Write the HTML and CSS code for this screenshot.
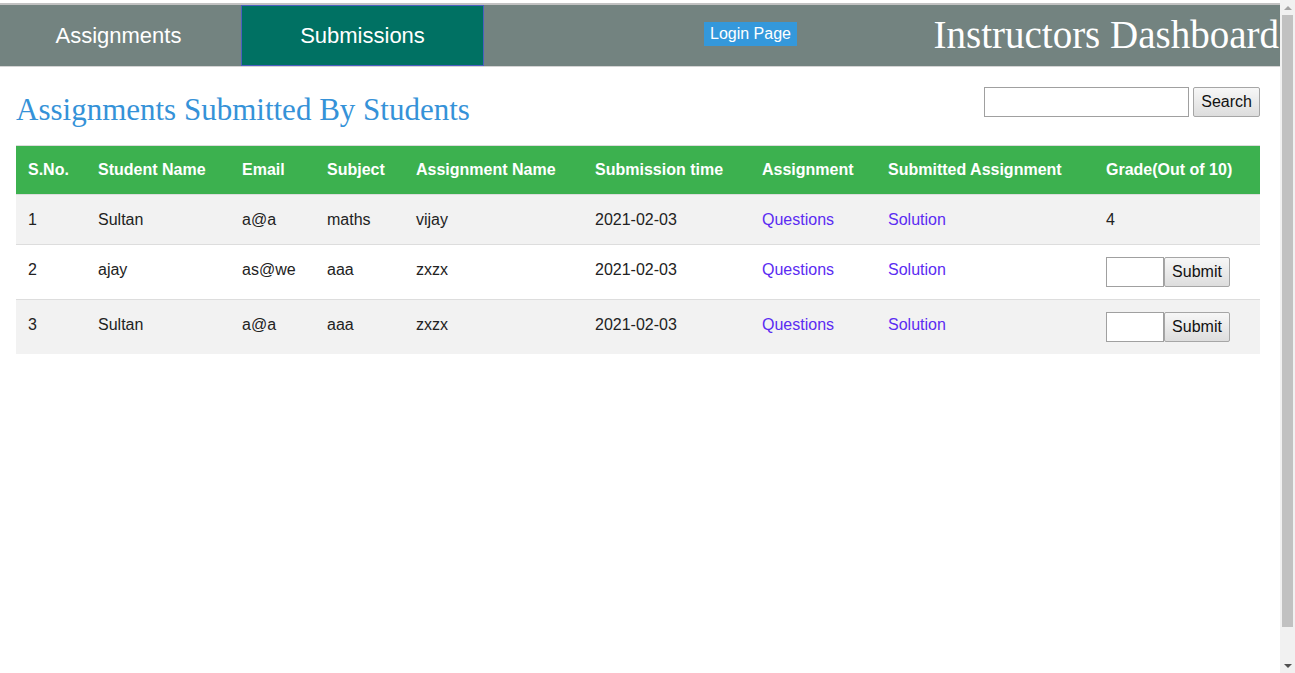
FILE: index.html
```html
<!DOCTYPE html>
<html>
<head>
<meta charset="utf-8">
<title>Instructors Dashboard</title>
<link rel="stylesheet" href="styles.css">
</head>
<body>
<div class="page">
  <nav class="topnav">
    <a class="tab tab-first" href="#">Assignments</a>
    <a class="tab tab-active" href="#">Submissions</a>
    <a class="login-btn" href="#">Login Page</a>
    <h1 class="site-title">Instructors Dashboard</h1>
  </nav>

  <main class="content">
    <div class="content-head">
      <h2 class="page-title">Assignments Submitted By Students</h2>
      <form class="search-form">
        <input class="search-input" type="text">
        <button class="btn" type="button">Search</button>
      </form>
    </div>

    <table class="sub-table">
      <colgroup>
        <col class="c-sno">
        <col class="c-name">
        <col class="c-email">
        <col class="c-subject">
        <col class="c-aname">
        <col class="c-time">
        <col class="c-assign">
        <col class="c-sol">
        <col class="c-grade">
      </colgroup>
      <thead>
        <tr>
          <th>S.No.</th>
          <th>Student Name</th>
          <th>Email</th>
          <th>Subject</th>
          <th>Assignment Name</th>
          <th>Submission time</th>
          <th>Assignment</th>
          <th>Submitted Assignment</th>
          <th>Grade(Out of 10)</th>
        </tr>
      </thead>
      <tbody>
        <tr class="row-alt">
          <td>1</td>
          <td>Sultan</td>
          <td>a@a</td>
          <td>maths</td>
          <td>vijay</td>
          <td>2021-02-03</td>
          <td><a class="link" href="#">Questions</a></td>
          <td><a class="link" href="#">Solution</a></td>
          <td>4</td>
        </tr>
        <tr>
          <td>2</td>
          <td>ajay</td>
          <td>as@we</td>
          <td>aaa</td>
          <td>zxzx</td>
          <td>2021-02-03</td>
          <td><a class="link" href="#">Questions</a></td>
          <td><a class="link" href="#">Solution</a></td>
          <td class="grade-cell">
            <form class="grade-form">
              <input class="grade-input" type="text">
              <button class="btn btn-submit" type="button">Submit</button>
            </form>
          </td>
        </tr>
        <tr class="row-alt">
          <td>3</td>
          <td>Sultan</td>
          <td>a@a</td>
          <td>aaa</td>
          <td>zxzx</td>
          <td>2021-02-03</td>
          <td><a class="link" href="#">Questions</a></td>
          <td><a class="link" href="#">Solution</a></td>
          <td class="grade-cell">
            <form class="grade-form">
              <input class="grade-input" type="text">
              <button class="btn btn-submit" type="button">Submit</button>
            </form>
          </td>
        </tr>
      </tbody>
    </table>
  </main>
</div>

<div class="fake-scrollbar" aria-hidden="true">
  <div class="sb-arrow sb-up"></div>
  <div class="sb-track"><div class="sb-thumb"></div></div>
  <div class="sb-arrow sb-down"></div>
</div>
</body>
</html>
```

FILE: styles.css
```css
html, body {
  margin: 0;
  padding: 0;
  background: #ffffff;
  overflow: hidden;
}

body {
  font-family: "Liberation Sans", Arial, sans-serif;
  font-size: 16px;
  color: #222;
}

.page {
  width: 1280px;
  padding-top: 3px;
  box-sizing: border-box;
}

/* ---------- top navigation ---------- */
.topnav {
  display: flex;
  align-items: center;
  height: 61px;
  background: #738380;
  border-top: 2px solid #c2c2c2;
  border-bottom: 1px solid #d4d4d4;
}

.tab {
  display: flex;
  align-items: center;
  justify-content: center;
  width: 241px;
  height: 100%;
  box-sizing: border-box;
  color: #ffffff;
  font-size: 22px;
  text-decoration: none;
}

.tab-first {
  padding-right: 4px;
}

.tab-active {
  width: 243px;
  background: #007163;
  border: 1px solid #4b5fbf;
}

.login-btn {
  margin-left: 220px;
  margin-top: -4px;
  padding: 0 6px;
  height: 24px;
  line-height: 24px;
  background: #3498db;
  color: #ffffff;
  font-size: 16px;
  text-decoration: none;
}

.site-title {
  margin: -1px 1px 0 auto;
  font-family: "Liberation Serif", "Times New Roman", serif;
  font-weight: normal;
  font-size: 39px;
  line-height: 44px;
  color: #ffffff;
  white-space: nowrap;
}

/* ---------- content ---------- */
.content {
  padding: 20px 20px 0 16px;
}

.content-head {
  display: flex;
  justify-content: space-between;
  align-items: flex-start;
}

.page-title {
  margin: 5px 0 0 0;
  font-family: "Liberation Serif", "Times New Roman", serif;
  font-weight: normal;
  font-size: 31px;
  line-height: 36px;
  color: #3592d8;
}

.search-form {
  display: flex;
  gap: 4px;
  margin: 0;
}

.search-input {
  width: 205px;
  height: 30px;
  box-sizing: border-box;
  border: 1px solid #a0a0a0;
  padding: 2px 4px;
  font-size: 14px;
  outline: none;
}

.btn {
  height: 30px;
  box-sizing: border-box;
  padding: 0 7px;
  border: 1px solid #a6a6a6;
  border-radius: 2px;
  background: linear-gradient(#f7f7f7, #dddddd);
  font-family: "Liberation Sans", Arial, sans-serif;
  font-size: 16px;
  color: #111;
}

/* ---------- table ---------- */
.sub-table {
  width: 1244px;
  margin-top: 17px;
  table-layout: fixed;
  border-collapse: collapse;
  border-top: 1px solid #dcdcdc;
}

.c-sno { width: 70px; }
.c-name { width: 144px; }
.c-email { width: 85px; }
.c-subject { width: 89px; }
.c-aname { width: 179px; }
.c-time { width: 167px; }
.c-assign { width: 126px; }
.c-sol { width: 218px; }
.c-grade { width: 166px; }

.sub-table th {
  background: #3cb14f;
  color: #ffffff;
  font-weight: bold;
  text-align: left;
  padding: 15px 12px;
  line-height: 18px;
  white-space: nowrap;
}

.sub-table tr {
  border-bottom: 1px solid #dddddd;
}

.sub-table tbody tr:last-child {
  border-bottom: none;
}

.sub-table td {
  text-align: left;
  vertical-align: top;
  padding: 15px 12px 15px;
  line-height: 19px;
  white-space: nowrap;
}

.row-alt {
  background: #f2f2f2;
}

.link {
  color: #5b2cf2;
  text-decoration: none;
}

.sub-table td.grade-cell {
  padding: 12px 12px 12px;
}

.grade-form {
  display: flex;
  margin: 0;
}

.grade-input {
  width: 58px;
  height: 30px;
  box-sizing: border-box;
  border: 1px solid #a0a0a0;
  background: #fff;
  outline: none;
}

.btn-submit {
  width: 66px;
  padding: 0;
}

/* ---------- classic scrollbar overlay ---------- */
.fake-scrollbar {
  position: fixed;
  top: 0;
  right: 0;
  width: 15px;
  height: 673px;
  background: #f1f1f1;
  display: flex;
  flex-direction: column;
}

.sb-arrow {
  height: 15px;
  display: flex;
  align-items: center;
  justify-content: center;
}

.sb-up::before,
.sb-down::before {
  content: "";
  width: 0;
  height: 0;
  border-left: 4px solid transparent;
  border-right: 4px solid transparent;
}

.sb-up::before {
  border-bottom: 4px solid #a3a3a3;
}

.sb-down::before {
  border-top: 4px solid #505050;
}

.sb-track {
  flex: 1;
  padding: 0 2px;
}

.sb-thumb {
  height: 612px;
  background: #c1c1c1;
}
```
